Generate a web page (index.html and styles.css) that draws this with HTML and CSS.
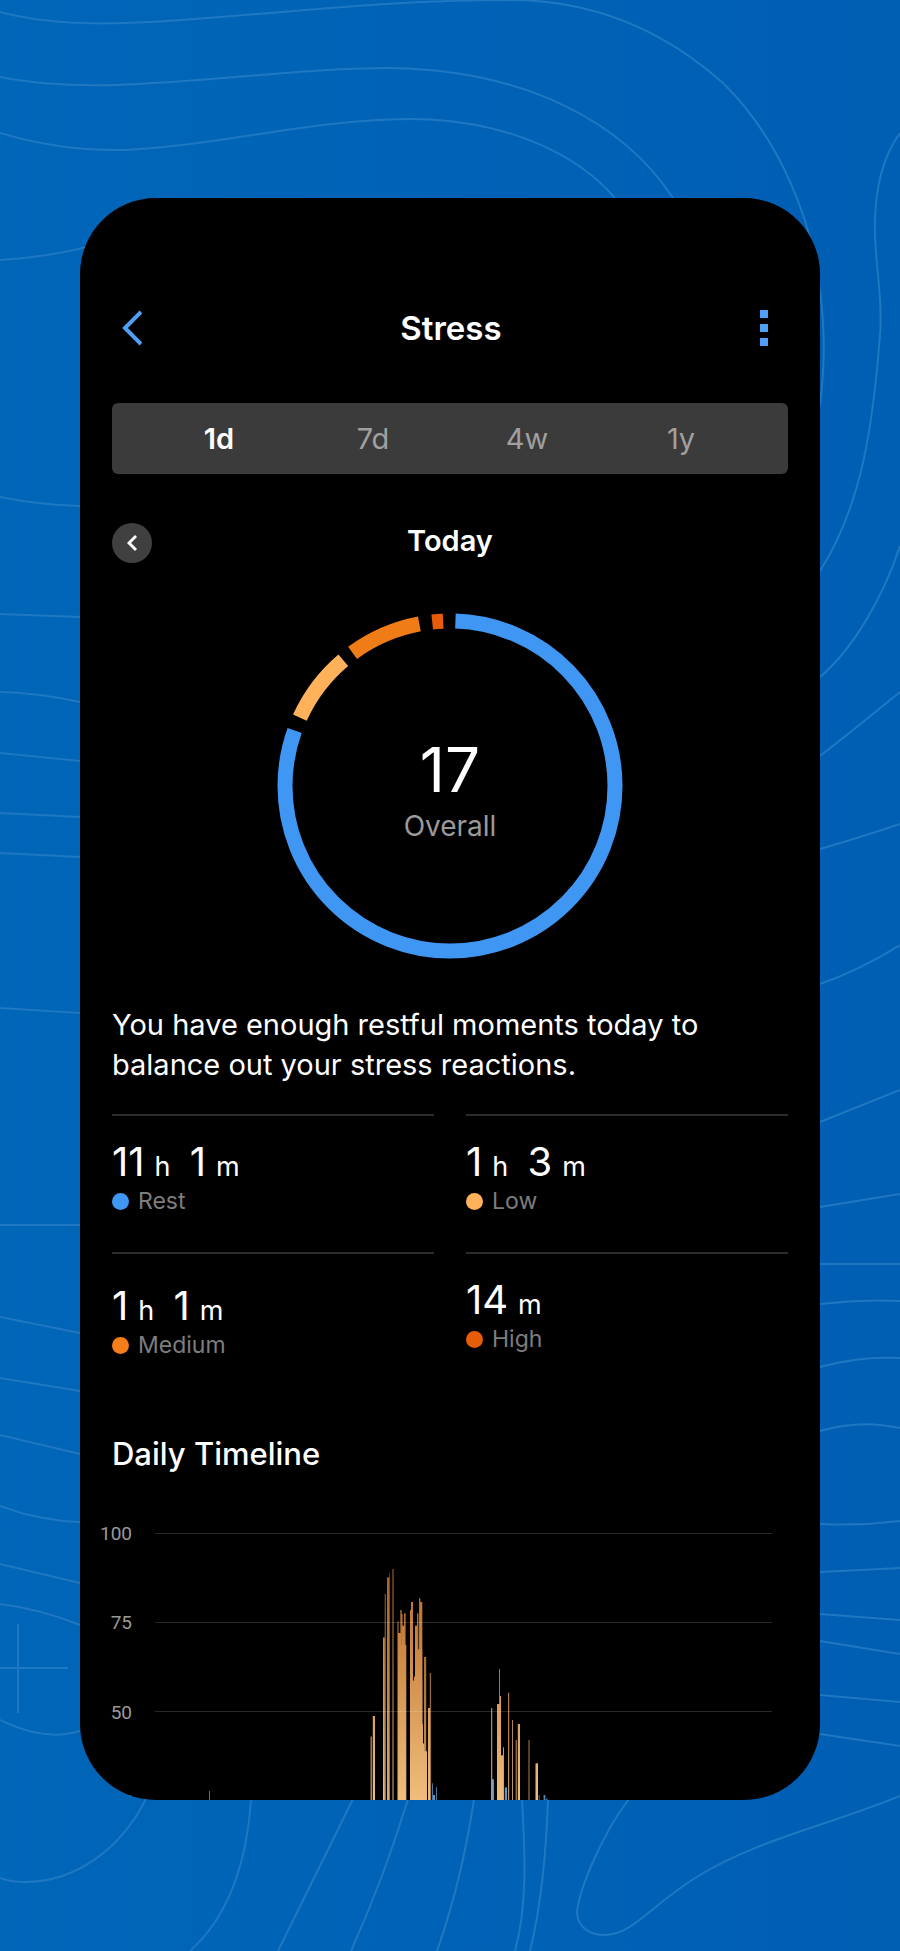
FILE: index.html
```html
<!DOCTYPE html>
<html lang="en">
<head>
    <meta charset="UTF-8">
    <meta name="viewport" content="width=device-width, initial-scale=1.0">
    <title>Stress</title>
    <link rel="stylesheet" href="styles.css">
</head>
<body>
    <svg class="contours" viewBox="0 0 900 1951" preserveAspectRatio="none" aria-hidden="true">
        <path d="M0 12C45 24 95 25 150 22C260 16 370 0 510 0C600 0 670 35 725 85C780 140 812 220 820 290C826 340 824 370 820 405"/>
        <path d="M0 77C35 84 75 86 115 85C210 82 300 68 390 68C530 70 625 125 673 198"/>
        <path d="M0 133C40 145 80 151 125 150C225 145 310 119 415 119C510 121 578 155 615 198"/>
        <path d="M0 260C30 258 60 254 86 247"/>
        <path d="M900 133C880 160 874 195 875 235C876 270 883 300 880 335C873 425 862 505 820 571"/>
        <path d="M820 677C852 650 882 600 900 546M820 756C850 733 878 710 900 692M820 849Q865 836 900 824M820 984Q860 970 900 945M820 1122L900 1090M820 1207L900 1194M820 1264H900M820 1304Q860 1299 900 1301M820 1367Q860 1356 900 1358M820 1431Q860 1419 900 1428M820 1524Q860 1526 900 1521M820 1572L900 1568M820 1614L900 1620M820 1641L900 1654M820 1695L900 1702M820 1734L900 1746"/>
        <path d="M0 497Q40 505 80 506M0 614L80 617M0 692Q40 693 80 702M0 753L80 761M0 813L80 817M0 853L80 857M0 1008L80 1013M0 1225H80M0 1317L80 1333M0 1378L80 1391M0 1435L80 1454M0 1506Q40 1521 80 1522M0 1564L80 1583M0 1604Q40 1609 80 1625M0 1720Q45 1742 80 1731"/>
        <path d="M0 1668H68M18 1624V1713"/>
        <path d="M146 1799C120 1850 75 1882 25 1882Q10 1882 0 1878M251 1799C247 1860 230 1915 190 1951M353 1799L278 1951M408 1799Q385 1875 351 1951M474 1799Q462 1880 437 1951M522 1799C524 1840 529 1900 515 1951M548 1799Q545 1890 530 1951"/>
        <path d="M629 1799C605 1830 580 1885 577 1912C577 1927 590 1935 604 1935C632 1935 648 1908 695 1878C755 1840 830 1825 900 1796"/>
    </svg>

    <main class="phone">
        <header class="topbar">
            <button class="icon-button" aria-label="Back">
                <svg width="20" height="36" viewBox="0 0 20 36"><path d="M19 2L3 18L19 34" fill="none" stroke="#509ff5" stroke-width="4"/></svg>
            </button>
            <h1>Stress</h1>
            <button class="icon-button" aria-label="More options">
                <svg width="8" height="36" viewBox="0 0 8 36"><path d="M0 0h8v8h-8zM0 14h8v8h-8zM0 28h8v8h-8z" fill="#509ff5"/></svg>
            </button>
        </header>

        <nav class="tabs">
            <button class="tab active">1d</button>
            <button class="tab">7d</button>
            <button class="tab">4w</button>
            <button class="tab">1y</button>
        </nav>

        <div class="day">
            <button class="prev" aria-label="Previous day">
                <svg width="10" height="18" viewBox="0 0 10 18"><path d="M9 2L2 9L9 16" fill="none" stroke="#fff" stroke-width="3"/></svg>
            </button>
            <h2>Today</h2>
        </div>

        <div class="donut">
            <svg viewBox="0 0 344 344" aria-hidden="true">
                <g fill="none" stroke-width="15" transform="rotate(-90 172 172)">
                    <circle cx="172" cy="172" r="165" pathLength="360" stroke="#3f97f3" stroke-dasharray="287.8 360" stroke-dashoffset="-1.9"/>
                    <circle cx="172" cy="172" r="165" pathLength="360" stroke="#ffb259" stroke-dasharray="25.2 360" stroke-dashoffset="-294.5"/>
                    <circle cx="172" cy="172" r="165" pathLength="360" stroke="#f07c18" stroke-dasharray="25.5 360" stroke-dashoffset="-323.8"/>
                    <circle cx="172" cy="172" r="165" pathLength="360" stroke="#e65c08" stroke-dasharray="3.8 360" stroke-dashoffset="-353.8"/>
                </g>
            </svg>
            <div class="score">
                <span class="score-value">17</span>
                <span class="score-label">Overall</span>
            </div>
        </div>

        <p class="summary">You have enough restful moments today to balance out your stress reactions.</p>

        <section class="stats">
            <div class="stat">
                <div class="time">11<small>h</small> 1<small>m</small></div>
                <div class="level"><i class="dot rest"></i>Rest</div>
            </div>
            <div class="stat">
                <div class="time">1<small>h</small> 3<small>m</small></div>
                <div class="level"><i class="dot low"></i>Low</div>
            </div>
            <div class="stat roomy">
                <div class="time">1<small>h</small> 1<small>m</small></div>
                <div class="level"><i class="dot medium"></i>Medium</div>
            </div>
            <div class="stat">
                <div class="time">14<small>m</small></div>
                <div class="level"><i class="dot high"></i>High</div>
            </div>
        </section>

        <h2 class="timeline-title">Daily Timeline</h2>
        <svg class="chart" viewBox="0 0 740 280">
            <defs>
                <linearGradient id="stress" gradientUnits="userSpaceOnUse" x1="0" y1="50" x2="0" y2="280">
                    <stop offset="0" stop-color="#bd6a28"/>
                    <stop offset="0.5" stop-color="#d59450"/>
                    <stop offset="1" stop-color="#efbd7d"/>
                </linearGradient>
            </defs>
            <g class="axis">
                <text x="52" y="20">100</text>
                <text x="52" y="109">75</text>
                <text x="52" y="199">50</text>
                <text x="52" y="288">25</text>
            </g>
            <g id="bars"></g>
            <path class="gridlines" d="M75 13.5H692M75 102.5H692M75 191.5H692"/>
        </svg>
    </main>

    <script>
        // [x, width, top, opacity]
        const stressBars = [
            [290.5, 1.5, 216.5, 0.7], [292.8, 2.2, 196, 1], [303, 1.8, 117.5, 1], [304.6, 1.4, 74, 0.6],
            [307, 2.3, 57.3, 0.9], [309, 1, 53.3, 0.5], [312.2, 1.6, 49, 0.6],
            [317.4, 1.2, 101.5, 0.8], [318, 3, 113, 1], [320.3, 1.4, 90, 0.9], [321.3, 1.2, 94, 1],
            [322, 2.4, 105.7, 1], [324, 1.6, 93.3, 0.9], [318, 8.3, 125, 1],
            [330, 1.4, 90, 1], [331, 2, 82, 1], [330, 12.2, 160.5, 1], [334, 1.6, 156.5, 1],
            [335, 2.4, 105.7, 1], [337, 1.4, 93.3, 0.9], [335, 7.2, 129.3, 1], [339, 1.4, 78.3, 0.9],
            [340, 2.3, 82, 1], [330, 13, 204, 1], [330, 14.2, 223.5, 1], [344, 2.2, 137, 0.8],
            [330, 17, 231.3, 1], [348, 2, 188, 1], [349.8, 1.3, 153, 0.7],
            [411, 1.3, 188, 0.8], [417, 3.5, 184, 1], [419, 1, 149, 0.8], [420, 1, 176, 1],
            [417, 6, 235.3, 1], [423, 1, 227.3, 0.9], [428, 1.2, 172.7, 0.8], [432, 1, 200, 0.8],
            [435.6, 1.4, 220, 0.6], [437.8, 2.2, 204, 1], [448.4, 1.2, 220, 0.6], [455.5, 2.5, 243.3, 1]
        ];
        const restBars = [
            [129, 1, 271, 0.8], [352, 1, 263.3, 0.8], [353, 2, 275, 1], [356, 1, 267.3, 0.8],
            [412, 2, 259.3, 1], [424.8, 2.2, 267.3, 1], [458.6, 1.2, 275, 0.6], [463.6, 1.8, 275, 0.9],
            [466, 1.5, 278.5, 0.8]
        ];

        function drawBars(bars, color) {
            bars.forEach(([x, width, top, opacity]) => {
                const bar = document.createElementNS("http://www.w3.org/2000/svg", "rect");
                bar.setAttribute("x", x);
                bar.setAttribute("y", top);
                bar.setAttribute("width", width);
                bar.setAttribute("height", 280 - top);
                bar.setAttribute("fill", color);
                bar.setAttribute("opacity", opacity);
                document.getElementById("bars").appendChild(bar);
            });
        }

        drawBars(restBars, "#5a94cc");
        drawBars(stressBars, "url(#stress)");
    </script>
</body>
</html>
```
FILE: styles.css
```css
* {
    box-sizing: border-box;
}
body {
    position: relative;
    margin: 0;
    padding: 198px 80px 151px;
    background: linear-gradient(90deg, #0066b8, #005eb3);
    color: white;
    font-family: Inter, "Liberation Sans", sans-serif;
}
button {
    padding: 0;
    border: none;
    background: none;
    color: inherit;
    font: inherit;
    cursor: pointer;
}
h1, h2, p {
    margin: 0;
}
svg {
    display: block;
}
.contours {
    position: absolute;
    top: 0;
    left: 0;
    width: 100%;
    height: 100%;
    fill: none;
    stroke: #1f78c1;
    stroke-width: 2;
}
.phone {
    position: relative;
    overflow: hidden;
    padding: 110px 32px 0;
    border-radius: 76px;
    background: black;
}
.topbar {
    display: flex;
    align-items: center;
    justify-content: space-between;
    height: 40px;
    padding: 0 20px 0 10px;
}
.topbar h1 {
    font-size: 33px;
    font-weight: 600;
    line-height: 40px;
}
.tabs {
    display: grid;
    grid-template-columns: repeat(4, 1fr);
    height: 71px;
    margin-top: 55px;
    padding: 0 30px;
    border-radius: 6px;
    background: #3b3b3b;
}
.tab {
    color: #a0a0a0;
    font-size: 29px;
}
.tab.active {
    color: white;
    font-weight: 600;
}
.day {
    display: grid;
    grid-template-columns: 40px 1fr 40px;
    margin-top: 49px;
}
.day h2 {
    font-size: 29px;
    font-weight: 600;
    line-height: 36px;
    text-align: center;
}
.prev {
    display: flex;
    align-items: center;
    justify-content: center;
    width: 40px;
    height: 40px;
    border-radius: 50%;
    background: #404040;
}
.donut {
    display: grid;
    justify-content: center;
    margin-top: 51px;
}
.donut > * {
    grid-area: 1 / 1;
}
.donut svg {
    width: 344px;
    height: 344px;
    overflow: visible;
}
.score {
    display: flex;
    flex-direction: column;
    align-items: center;
    padding-top: 124px;
}
.score-value {
    font-size: 62px;
    line-height: 64px;
}
.score-label {
    margin-top: 6px;
    color: #9a9a9a;
    font-size: 28px;
    line-height: 36px;
}
.summary {
    margin-top: 47px;
    font-size: 29px;
    line-height: 40px;
}
.stats {
    display: grid;
    grid-template-columns: 1fr 1fr;
    grid-auto-rows: 138px;
    column-gap: 32px;
    margin-top: 29px;
}
.stat {
    padding-top: 26px;
    border-top: 2px solid #2c2c2c;
}
.stat.roomy {
    padding-top: 32px;
}
.time {
    font-size: 40px;
    line-height: 40px;
}
.time small {
    margin: 0 8px 0 10px;
    font-size: 27px;
}
.level {
    display: flex;
    align-items: center;
    gap: 9px;
    color: #7d7d7d;
    font-size: 23px;
    line-height: 28px;
}
.dot {
    width: 17px;
    height: 17px;
    border-radius: 50%;
}
.rest {
    background: #3f97f3;
}
.low {
    background: #ffb259;
}
.medium {
    background: #f57e1b;
}
.high {
    background: #e65c08;
}
.timeline-title {
    margin-top: 44px;
    font-size: 31px;
    font-weight: 500;
    line-height: 40px;
}
.chart {
    width: calc(100% + 64px);
    margin: 46px -32px 0;
}
.axis {
    fill: #9a9a9a;
    font-family: Roboto, sans-serif;
    font-size: 19px;
    text-anchor: end;
}
.gridlines {
    fill: none;
    stroke: #fff;
    stroke-opacity: 0.16;
}
```
